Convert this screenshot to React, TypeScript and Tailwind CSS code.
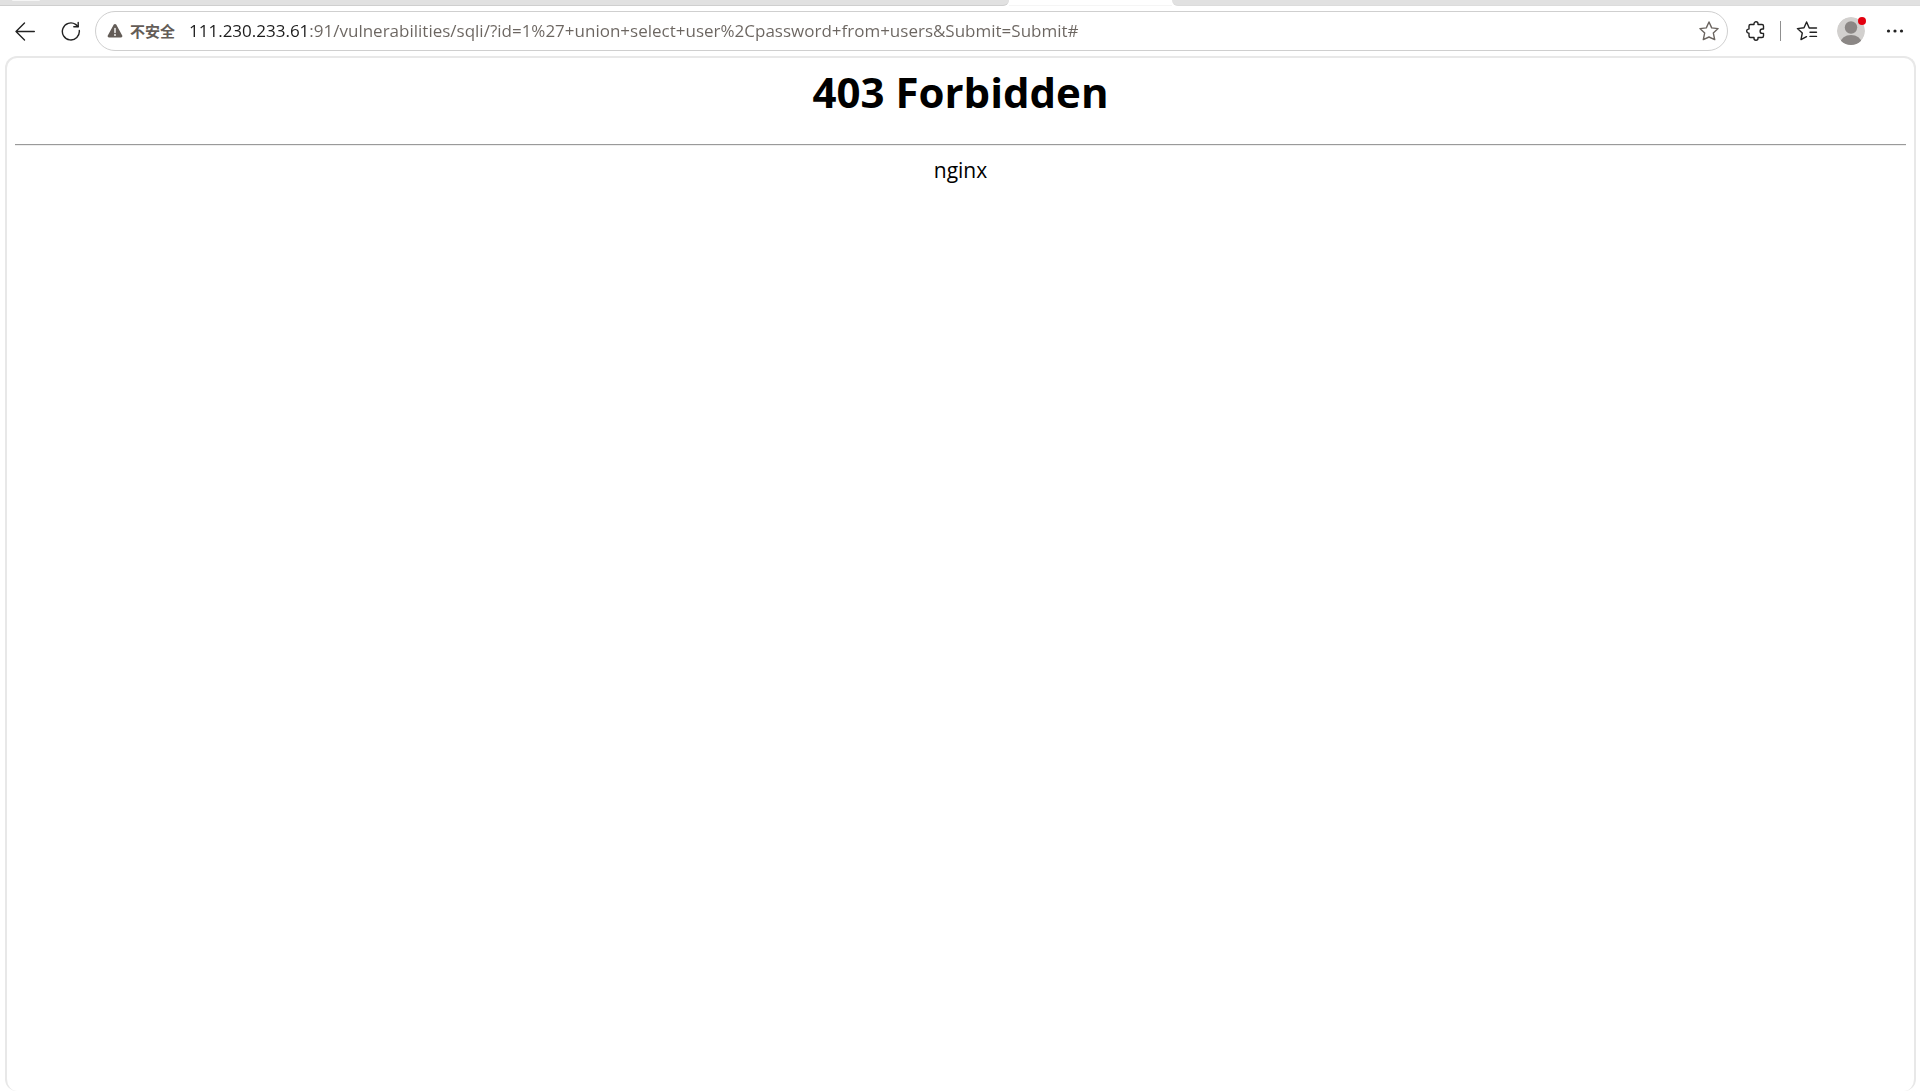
import React from "react";

const BackIcon = () => (
  <svg width="20" height="20" viewBox="0 0 20 20" fill="none" stroke="#222" strokeWidth="1.4" strokeLinecap="round" strokeLinejoin="round">
    <path d="M19.3 10.5H1M9.5 2L1 10.5l8.500 8.500" />
  </svg>
);

const ReloadIcon = () => (
  <svg width="20" height="20" viewBox="0 0 20 20" fill="none" stroke="#222" strokeWidth="1.4" strokeLinecap="round" strokeLinejoin="round">
    <path d="M18.300 9.500A8.500 8.500 0 1 1 14.600 3.400L17.200 5.600" />
    <path d="M17.200 1.500v4.300h-4.400" />
  </svg>
);

const WarningIcon = () => (
  <svg width="16" height="16" viewBox="0 0 16 16" className="shrink-0">
    <path d="M6.800 1.600a1.400 1.400 0 0 1 2.400 0l6 10.800a1.400 1.400 0 0 1-1.200 2.100H2a1.400 1.400 0 0 1-1.200-2.100z" fill="#635c57" />
    <path d="M8 5.500v4" stroke="#fff" strokeWidth="1.400" strokeLinecap="round" />
    <circle cx="8" cy="12" r="0.900" fill="#fff" />
  </svg>
);

const StarIcon = () => (
  <svg width="20" height="20" viewBox="0 0 20 20" fill="none" stroke="#6b6560" strokeWidth="1.400" strokeLinejoin="round">
    <path d="M10 1l2.700 5.900 6.400.7-4.800 4.300 1.400 6.700L10 16l-5.700 2.600 1.400-6.700L.9 7.600l6.400-.7z" />
  </svg>
);

const ExtensionsIcon = () => (
  <svg width="20" height="20" viewBox="0 0 20 20" fill="none" stroke="#222" strokeWidth="1.400" strokeLinejoin="round">
    <path d="M4.500 3.500H8V2.800a2 2 0 0 1 4 0v.7h4a1.500 1.500 0 0 1 1.500 1.500v3h-1.200a2.200 2.200 0 0 0 0 4.400h1.200V15a1.500 1.500 0 0 1-1.500 1.500h-4v.7a2 2 0 0 1-4 0v-.7H4.500A1.500 1.500 0 0 1 3 15v-2.900h-.3a2 2 0 0 1 0-4H3V5a1.500 1.500 0 0 1 1.500-1.500z" />
  </svg>
);

const FavoritesIcon = () => (
  <svg width="22" height="20" viewBox="0 0 22 20" fill="none" stroke="#222" strokeWidth="1.400" strokeLinecap="round" strokeLinejoin="round">
    <path d="M20.500 7h-7.300L10.600 1 8 6.800l-6.600.8 4.900 4.400L5 18.600l5.500-2.900" />
    <path d="M14 11.200h6.500M14 15.400h6.500" />
  </svg>
);

const ProfileIcon = () => (
  <svg width="28" height="28" viewBox="0 0 28 28">
    <defs>
      <clipPath id="avatar">
        <circle cx="14" cy="14" r="14" />
      </clipPath>
    </defs>
    <g clipPath="url(#avatar)">
      <circle cx="14" cy="14" r="14" fill="#d2d0ce" />
      <circle cx="14" cy="10.500" r="6.200" fill="#8b8785" />
      <ellipse cx="14" cy="26" rx="10.500" ry="8" fill="#8b8785" />
    </g>
  </svg>
);

const MoreIcon = () => (
  <svg width="18" height="18" viewBox="0 0 18 18" fill="#222">
    <circle cx="2.500" cy="9" r="1.600" />
    <circle cx="9" cy="9" r="1.600" />
    <circle cx="15.500" cy="9" r="1.600" />
  </svg>
);

const IconButton = ({
  label,
  className = "",
  children,
}: {
  label: string;
  className?: string;
  children: React.ReactNode;
}) => {
  return (
    <button
      type="button"
      aria-label={label}
      className={`flex h-8 shrink-0 items-center justify-center ${className}`}
    >
      {children}
    </button>
  );
};

const TabStrip = () => {
  return (
    <div className="flex h-1.5 shrink-0 bg-white">
      <div className="flex grow-[1009] basis-0 rounded-br-md border-b border-[#cfcfcf] bg-[#e1e1e1]">
        <div className="ml-3 h-px w-7 rounded-b bg-[#f5f5f5]" />
      </div>
      <div className="grow-[163] basis-0 border-b border-[#f5f5f5]" />
      <div className="grow-[748] basis-0 rounded-bl-md border-b border-[#dcdcdc] bg-[#e1e1e1]" />
    </div>
  );
};

const Toolbar = () => {
  return (
    <div className="flex h-[50px] shrink-0 items-center px-[11px]">
      <IconButton label="Back" className="w-7">
        <BackIcon />
      </IconButton>
      <IconButton label="Reload" className="ml-4 w-8">
        <ReloadIcon />
      </IconButton>
      <form
        className="ml-2 flex h-10 min-w-0 flex-1 items-center rounded-full border border-[#cfcfcf] bg-white pl-[11px] pr-2"
        onSubmit={(e) => e.preventDefault()}
      >
        <button
          type="button"
          className="flex shrink-0 items-center gap-[7px] text-[15px] font-bold text-[#635c57]"
        >
          <WarningIcon />
          不安全
        </button>
        {/* the host is darker than the rest of the address */}
        <input
          type="text"
          aria-label="Address"
          spellCheck={false}
          defaultValue="111.230.233.61:91/vulnerabilities/sqli/?id=1%27+union+select+user%2Cpassword+from+users&Submit=Submit#"
          className="ml-[14px] h-8 min-w-0 flex-1 bg-[linear-gradient(90deg,#1b1b1b_120px,#6b6560_120px)] bg-clip-text pb-0.5 text-[17px] text-transparent outline-none"
        />
        <IconButton label="Add to favorites" className="w-5">
          <StarIcon />
        </IconButton>
      </form>
      <IconButton label="Extensions" className="ml-4 w-6">
        <ExtensionsIcon />
      </IconButton>
      <div className="mx-3 h-5 w-px bg-[#8f8f8f]" />
      <IconButton label="Favorites" className="w-7">
        <FavoritesIcon />
      </IconButton>
      <IconButton label="Profile" className="relative ml-4 w-7">
        <ProfileIcon />
        <span className="absolute -right-px top-0.5 size-2 rounded-full bg-[#e3000f]" />
      </IconButton>
      <IconButton label="Settings and more" className="ml-4 w-7">
        <MoreIcon />
      </IconButton>
    </div>
  );
};

export default function App() {
  return (
    <div className="flex h-screen flex-col bg-white font-['Open_Sans','Noto_Sans_CJK_SC',sans-serif]">
      <TabStrip />
      <Toolbar />
      <main className="ml-[5px] mr-1 flex-1 rounded-xl border-2 border-b-0 border-[#e8e8e8] bg-white px-2 pt-1.5 text-center text-black">
        <h1 className="text-[42px] leading-[56px] font-bold">403 Forbidden</h1>
        <hr className="mt-6 border-t border-b border-t-[#9a9a9a] border-b-[#eeeeee]" />
        <p className="mt-3 text-[21px] leading-6">nginx</p>
      </main>
    </div>
  );
}
